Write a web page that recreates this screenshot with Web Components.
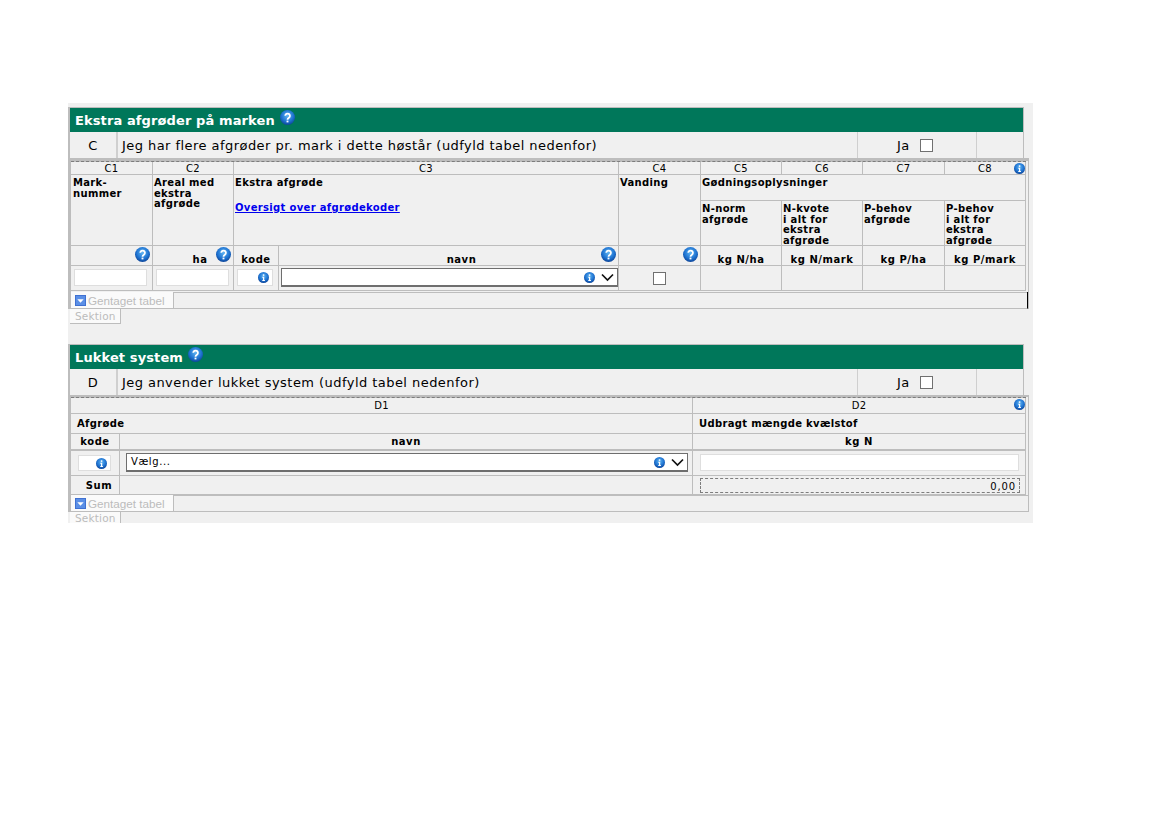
<!DOCTYPE html>
<html lang="da">
<head>
<meta charset="utf-8">
<title>Ekstra afgrøder på marken</title>
<style>
    html, body { margin: 0; background: #fff; }
    body { font-family: "DejaVu Sans", Verdana, sans-serif; color: #000; }
</style>
</head>
<body>
<form-sheet>
    <form-section heading="Ekstra afgrøder på marken" letter="C" question="Jeg har flere afgrøder pr. mark i dette høstår (udfyld tabel nedenfor)" marker>
        <crop-table></crop-table>
    </form-section>
    <form-section heading="Lukket system" letter="D" question="Jeg anvender lukket system (udfyld tabel nedenfor)" second>
        <closed-table></closed-table>
    </form-section>
</form-sheet>

<script>
// small round help / info icons
class HelpIcon extends HTMLElement{
    constructor(){
        super();
        this.attachShadow({mode:'open'});
        const type = this.getAttribute('type') || 'q';
        const size = type === 'q' ? 15 : 11;
        const id = 'g' + type;
        const mark = type === 'q'
            ? '<path d="M5.6 6.2a2.5 2.4 0 1 1 3.9 2c-1 .7-1.5 1.1-1.5 2.2" fill="none" stroke="#fff" stroke-width="1.9"/><rect x="7" y="11.3" width="2" height="1.9" fill="#fff"/>'
            : '<rect x="7" y="3.4" width="2.2" height="2.2" fill="#fff"/><path d="M6.2 7h2.9v4.6h1v1.4H6.2v-1.4h1V8.4h-1z" fill="#fff"/>';
        this.shadowRoot.innerHTML = `
        <style>
            :host{ display:inline-block; width:${size}px; height:${size}px; line-height:0; }
            svg{ display:block; }
        </style>
        <svg width="${size}" height="${size}" viewBox="0 0 16 16">
            <defs>
                <radialGradient id="${id}" cx="50%" cy="38%" r="65%">
                    <stop offset="0" stop-color="#5fb4f2"/>
                    <stop offset="0.6" stop-color="#1f74d2"/>
                    <stop offset="1" stop-color="#0b3f92"/>
                </radialGradient>
            </defs>
            <circle cx="8" cy="8" r="8" fill="url(#${id})"/>
            ${mark}
        </svg>`;
    }
}
customElements.define('help-icon',HelpIcon);

// the dropdown with info icon and chevron
class CropSelect extends HTMLElement{
    constructor(){
        super();
        this.attachShadow({mode:'open'});
        this.shadowRoot.innerHTML = `
        <style>
            :host{ display:flex; align-items:center; box-sizing:border-box; height:19px; background:#fff; border:1px solid #6e6e6e; border-bottom-width:2px; font-size:10px; padding:0 3px 0 4px; }
            .value{ flex:1; letter-spacing:.6px; }
            help-icon{ margin-right:6px; }
            svg{ display:block; }
        </style>
        <span class="value"><slot></slot></span>
        <help-icon type="i"></help-icon>
        <svg width="13" height="9" viewBox="0 0 13 9"><path d="M1 1.5l5.5 5.5 5.5-5.5" fill="none" stroke="#111" stroke-width="1.7"/></svg>`;
    }
}
customElements.define('crop-select',CropSelect);

// checkbox square
class TickBox extends HTMLElement{
    constructor(){
        super();
        this.attachShadow({mode:'open'});
        this.shadowRoot.innerHTML = `
        <style>
            :host{ display:block; box-sizing:border-box; width:13px; height:13px; background:#fff; border:1px solid #707070; }
        </style>`;
    }
}
customElements.define('tick-box',TickBox);

// the grey sheet behind everything
class FormSheet extends HTMLElement{
    constructor(){
        super();
        this.attachShadow({mode:'open'});
        this.shadowRoot.innerHTML = `
        <style>
            :host{ display:block; box-sizing:border-box; width:965px; height:420px; margin:103px 0 0 68px; padding-top:4px; background:#f0f0f0; }
        </style>
        <slot></slot>`;
    }
}
customElements.define('form-sheet',FormSheet);

// one section: green head, question row, table, repeat bar and tab
class FormSection extends HTMLElement{
    constructor(){
        super();
        this.attachShadow({mode:'open'});
        const second = this.hasAttribute('second');
        this.shadowRoot.innerHTML = `
        <style>
            :host{ display:block; margin-bottom:${second ? 0 : 20}px; }
            .head{ box-sizing:border-box; width:956px; height:25px; display:flex; align-items:center; gap:5px; padding:0 0 0 5px; background:#00775a; border:1px solid #bdbdbd; border-width:1px 1px 0 2px; color:#fff; font-size:13px; font-weight:bold; letter-spacing:.11px; }
            .head help-icon{ margin-top:-5px; }
            .ask{ box-sizing:border-box; width:956px; height:26px; display:grid; grid-template-columns:46px 741px 119px 1fr; border:1px solid #bdbdbd; border-width:0 1px 0 2px; font-size:13px; letter-spacing:.45px; }
            .ask > div{ display:flex; align-items:center; box-sizing:border-box; }
            .letter{ justify-content:center; }
            .text{ border-left:2px solid #cfcfcf; padding-left:4px; }
            .ja{ border-left:1px solid #cfcfcf; padding-left:39px; gap:10px; }
            .end{ border-left:1px solid #cfcfcf; }
            .wrap{ box-sizing:border-box; width:961px; border:solid #bdbdbd; border-width:${second ? 2 : 3}px 1px 0 3px; padding-right:2px; }
            .bar{ display:flex; height:17px; box-sizing:border-box; margin-top:${second ? 0 : 1}px; border-bottom:1px solid #bdbdbd; margin-right:-2px; ${this.hasAttribute('marker') ? 'border-right:1px solid #000;' : ''} }
            .tab{ box-sizing:border-box; width:103px; display:flex; align-items:center; gap:2px; padding-left:4px; background:#fafafa; border-right:1px solid #bdbdbd; color:#bcbcbc; font:11.7px "Liberation Sans",Arial,sans-serif; }
            .tab svg{ display:block; }
            .rest{ flex:1; border-top:1px solid #bdbdbd; }
            .foot{ box-sizing:border-box; width:51px; height:${second ? 12 : 15}px; margin-left:2px; padding-left:5px; background:#fafafa; border:solid #bdbdbd; border-width:0 1px ${second ? 0 : 1}px 0; color:#bcbcbc; font-size:10.5px; line-height:${second ? 12 : 14}px; letter-spacing:.2px; }
        </style>
        <div class="head"><span>${this.getAttribute('heading')}</span><help-icon type="q"></help-icon></div>
        <div class="ask">
            <div class="letter">${this.getAttribute('letter')}</div>
            <div class="text">${this.getAttribute('question')}</div>
            <div class="ja"><span>Ja</span><tick-box></tick-box></div>
            <div class="end"></div>
        </div>
        <div class="wrap">
            <slot></slot>
            <div class="bar">
                <div class="tab">
                    <svg width="11" height="11" viewBox="0 0 12 12"><rect width="12" height="12" fill="#3f6fd0"/><rect x="1" y="1" width="10" height="10" fill="#5b8fe6"/><path d="M2.5 4.5h7L6 8.5z" fill="#fff"/></svg>
                    <span>Gentaget tabel</span>
                </div>
                <div class="rest"></div>
            </div>
        </div>
        <div class="foot">Sektion</div>`;
    }
}
customElements.define('form-section',FormSection);

const gridStyle = `
    :host{ display:block; }
    .grid{ display:grid; gap:1px; background:#bdbdbd; border-top:1px dashed #7d7d7d; padding:0 1px 1px 0; font-size:10px; line-height:10.5px; }
    .grid > *{ background:#f0f0f0; box-sizing:border-box; min-width:0; position:relative; }
    .no{ text-align:center; line-height:13px; letter-spacing:.3px; }
    .lab{ font-weight:bold; padding:3px 0 0 1px; letter-spacing:.33px; }
    .unit{ font-weight:bold; text-align:center; display:flex; align-items:flex-end; justify-content:center; letter-spacing:.55px; }
    .corner{ position:absolute; right:0; top:1px; }
    .hint{ position:absolute; right:2px; top:1px; }
    .field{ box-sizing:border-box; height:17px; background:#fff; border:1px solid #dedede; display:flex; align-items:center; justify-content:flex-end; padding-right:3px; }
    a{ color:#0000ee; }
`;

// table C
class CropTable extends HTMLElement{
    constructor(){
        super();
        this.attachShadow({mode:'open'});
        this.shadowRoot.innerHTML = `
        <style>
            ${gridStyle}
            .grid{ grid-template-columns:81px 80px 44px 339px 81px 80px 80px 81px 80px; grid-template-rows:12px 25px 44px 19px 24px; }
            .span-r{ grid-row:span 2; }
            .wide{ grid-column:span 4; }
            .spaced{ margin-top:14px; }
            .cell{ padding:3px 0 0 3px; }
            .cell-box{ display:flex; align-items:center; justify-content:center; }
        </style>
        <div class="grid">
            <div class="no">C1</div><div class="no">C2</div><div class="no" style="grid-column:span 2">C3</div><div class="no">C4</div>
            <div class="no">C5</div><div class="no">C6</div><div class="no">C7</div>
            <div class="no">C8<help-icon class="corner" type="i"></help-icon></div>

            <div class="lab span-r" style="padding-left:2px">Mark-<br>nummer</div>
            <div class="lab span-r">Areal med<br>ekstra<br>afgrøde</div>
            <div class="lab span-r" style="grid-column:span 2">Ekstra afgrøde<div class="spaced"><a href="#">Oversigt over afgrødekoder</a></div></div>
            <div class="lab span-r">Vanding</div>
            <div class="lab wide">Gødningsoplysninger</div>

            <div class="lab">N-norm<br>afgrøde</div>
            <div class="lab">N-kvote<br>i alt for<br>ekstra<br>afgrøde</div>
            <div class="lab">P-behov<br>afgrøde</div>
            <div class="lab">P-behov<br>i alt for<br>ekstra<br>afgrøde</div>

            <div><help-icon class="hint" type="q"></help-icon></div>
            <div class="unit" style="padding-left:14px">ha<help-icon class="hint" type="q"></help-icon></div>
            <div class="unit">kode</div>
            <div class="unit" style="padding-left:26px">navn<help-icon class="hint" type="q"></help-icon></div>
            <div><help-icon class="hint" type="q"></help-icon></div>
            <div class="unit">kg N/ha</div><div class="unit">kg N/mark</div><div class="unit">kg P/ha</div><div class="unit">kg P/mark</div>

            <div class="cell"><div class="field" style="width:73px"></div></div>
            <div class="cell"><div class="field" style="width:73px"></div></div>
            <div class="cell"><div class="field" style="width:36px"><help-icon type="i"></help-icon></div></div>
            <div style="padding:2px 0 0 2px"><crop-select></crop-select></div>
            <div class="cell-box"><tick-box></tick-box></div>
            <div></div><div></div><div></div><div></div>
        </div>`;
    }
}
customElements.define('crop-table',CropTable);

// table D
class ClosedTable extends HTMLElement{
    constructor(){
        super();
        this.attachShadow({mode:'open'});
        this.shadowRoot.innerHTML = `
        <style>
            ${gridStyle}
            .grid{ grid-template-columns:48px 572px 332px; grid-template-rows:15px 19px 15px 25px 18px; }
            .no{ line-height:15px; }
            .lab{ padding:5px 0 0 6px; }
            .unit{ padding-bottom:2px; }
            .pick{ padding:2px 0 0 6px; }
            .thick{ border-top:1px solid #bdbdbd; }
            .sum{ box-sizing:border-box; height:15px; margin:2px 0 0 7px; width:320px; border:1px dashed #7d7d7d; text-align:right; padding-right:3px; line-height:15px; letter-spacing:.9px; }
        </style>
        <div class="grid">
            <div class="no" style="grid-column:span 2">D1</div>
            <div class="no">D2<help-icon class="corner" type="i"></help-icon></div>
            <div class="lab" style="grid-column:span 2">Afgrøde</div>
            <div class="lab">Udbragt mængde kvælstof</div>
            <div class="unit">kode</div><div class="unit">navn</div><div class="unit">kg N</div>

            <div class="thick" style="padding:4px 0 0 7px"><div class="field" style="height:16px;width:33px"><help-icon type="i"></help-icon></div></div>
            <div class="thick pick"><crop-select style="width:562px">Vælg...</crop-select></div>
            <div class="thick" style="padding:3px 0 0 7px"><div class="field" style="width:319px"></div></div>

            <div class="unit" style="align-items:center;padding:2px 0 0 8px">Sum</div>
            <div></div>
            <div><div class="sum">0,00</div></div>
        </div>`;
    }
}
customElements.define('closed-table',ClosedTable);
</script>
</body>
</html>
